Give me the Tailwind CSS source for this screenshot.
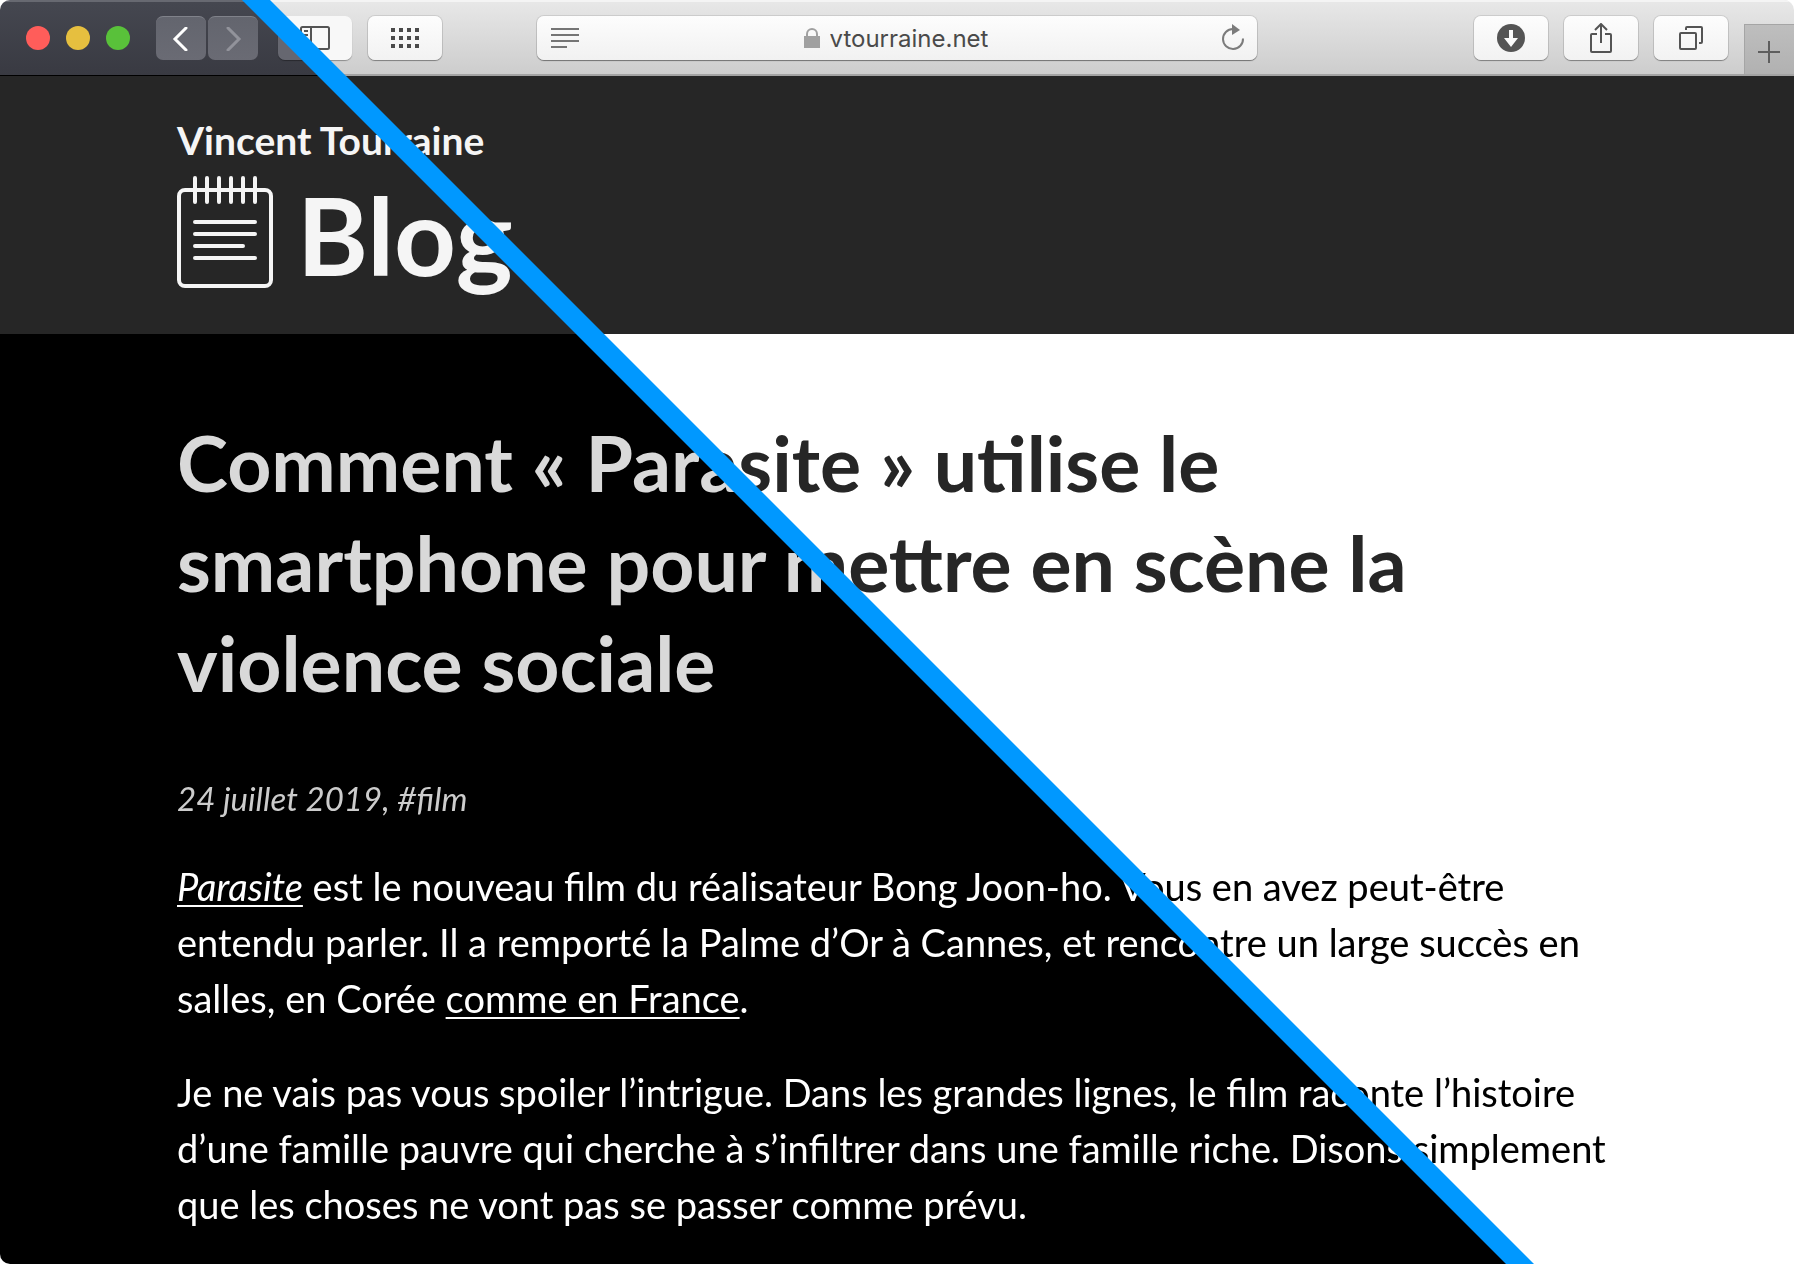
<!DOCTYPE html>
<html lang="fr">
<head>
<meta charset="utf-8">
<title>Vincent Tourraine – Blog</title>
<script src="https://cdn.jsdelivr.net/npm/@tailwindcss/browser@4"></script>
</head>
<body class="bg-white">
<div class="relative isolate flex min-h-screen flex-col overflow-hidden rounded-[10px] bg-white font-['Lato',sans-serif]">

  <!-- Browser toolbar -->
  <div class="relative grid h-[76px] grid-cols-[1fr_720px_1fr] items-center border-b-2 border-[#a3a3a3] bg-linear-to-b from-[#e8e8e8] to-[#cdcdcd] font-['Inter',sans-serif]">
    <div class="absolute inset-x-0 top-0 h-[2px] bg-[#f4f4f4]"></div>
    <div class="absolute inset-x-0 top-0 h-[76px] border-t-2 border-b border-t-[#676971] border-b-black bg-linear-to-b from-[#454750] to-[#393a42] [clip-path:polygon(0_0,256px_0,332px_100%,0_100%)]"></div>

    <div class="relative flex items-center pt-[2px] pl-[26px]">
      <div class="flex gap-4">
        <button aria-label="Fermer" class="size-6 rounded-full bg-[#ff5d5a]"></button>
        <button aria-label="Réduire" class="size-6 rounded-full bg-[#e6bf3f]"></button>
        <button aria-label="Agrandir" class="size-6 rounded-full bg-[#59c13a]"></button>
      </div>
      <div class="ml-[26px] flex gap-[2px]">
        <button aria-label="Précédent" class="flex h-11 w-[50px] items-center justify-center rounded-[7px] border-t border-[#80828a] bg-linear-to-b from-[#63656e] to-[#6a6b74]">
          <svg class="size-6" viewBox="0 0 24 24" fill="none" stroke="#fff" stroke-width="3" stroke-linecap="round"><path d="M17 1 6 12l11 11"/></svg>
        </button>
        <button aria-label="Suivant" class="flex h-11 w-[50px] items-center justify-center rounded-[7px] border-t border-[#80828a] bg-linear-to-b from-[#63656e] to-[#6a6b74]">
          <svg class="size-6" viewBox="0 0 24 24" fill="none" stroke="#92939b" stroke-width="3" stroke-linecap="round"><path d="m7 1 11 11L7 23"/></svg>
        </button>
      </div>
      <button aria-label="Barre latérale" class="ml-5 flex h-11 w-[74px] items-center justify-center rounded-[7px] bg-[linear-gradient(45deg,#666770_27px,#f8f8f8_27px)] shadow-[0_1px_1px_#0005]">
        <svg class="h-6 w-[30px]" viewBox="0 0 30 24" fill="none" stroke="#545454" stroke-width="2"><rect x="1" y="1" width="28" height="22" rx="1.500"/><path d="M11 1v22M4 5h4M4 9h4M4 13h4"/></svg>
      </button>
      <button aria-label="Sites les plus visités" class="ml-4 flex h-11 w-[74px] items-center justify-center rounded-[7px] bg-linear-to-b from-[#fdfdfd] to-[#f2f2f2] shadow-[0_0_0_1px_#00000018,0_1px_1px_#0005]">
        <svg class="h-5 w-7" viewBox="0 0 28 20" fill="none" stroke="#4a4a4a" stroke-width="4" stroke-dasharray="4 4"><path d="M0 2h28M0 10h28M0 18h28"/></svg>
      </button>
    </div>

    <div class="relative mt-[2px] flex h-11 items-center justify-between rounded-[7px] bg-linear-to-b from-[#fdfdfd] to-[#f1f1f1] pr-3 pl-[14px] shadow-[0_0_0_1px_#00000018,0_1px_1px_#0006]">
      <button aria-label="Lecteur">
        <svg class="h-5 w-7" viewBox="0 0 28 20" stroke="#757575" stroke-width="2"><path d="M0 1h28M0 7h28M0 13h28M0 19h16"/></svg>
      </button>
      <label class="flex items-center gap-[10px]">
        <svg class="h-5 w-4" viewBox="0 0 16 20"><path d="M0 8h16v12H0z" fill="#a0a0a0"/><path d="M3 9V6a5 5 0 0 1 10 0v3" fill="none" stroke="#a0a0a0" stroke-width="2"/></svg>
        <input aria-label="Adresse" value="vtourraine.net" class="field-sizing-content bg-transparent pt-[2px] text-2xl text-[#4a4a4a] outline-none">
      </label>
      <button aria-label="Recharger" class="flex w-8 justify-end">
        <svg class="h-[30px] w-6" viewBox="0 0 24 30"><path d="M12 6a10 10 0 1 0 10 9.500" fill="none" stroke="#7b7b7b" stroke-width="2"/><path d="m11 1 8 6-8 5z" fill="#7b7b7b"/></svg>
      </button>
    </div>

    <div class="relative flex h-full items-center justify-end">
      <div class="flex gap-4 pt-[2px]">
        <button aria-label="Téléchargements" class="flex h-11 w-[74px] items-center justify-center rounded-[7px] bg-linear-to-b from-[#fdfdfd] to-[#f2f2f2] shadow-[0_0_0_1px_#00000018,0_1px_1px_#0005]">
          <svg class="size-7" viewBox="0 0 28 28"><circle cx="14" cy="14" r="14" fill="#545454"/><path d="M12 6h4v8h5l-7 9-7-9h5z" fill="#fafafa"/></svg>
        </button>
        <button aria-label="Partager" class="flex h-11 w-[74px] items-center justify-center rounded-[7px] bg-linear-to-b from-[#fdfdfd] to-[#f2f2f2] shadow-[0_0_0_1px_#00000018,0_1px_1px_#0005]">
          <svg class="h-[30px] w-6" viewBox="0 0 24 30" fill="none" stroke="#545454" stroke-width="2"><path d="M8 11H3a1 1 0 0 0-1 1v16a1 1 0 0 0 1 1h18a1 1 0 0 0 1-1V12a1 1 0 0 0-1-1h-5M12 20V2M6 7l6-6 6 6"/></svg>
        </button>
        <button aria-label="Onglets" class="flex h-11 w-[74px] items-center justify-center rounded-[7px] bg-linear-to-b from-[#fdfdfd] to-[#f2f2f2] shadow-[0_0_0_1px_#00000018,0_1px_1px_#0005]">
          <svg class="size-6" viewBox="0 0 24 24" fill="none" stroke="#545454" stroke-width="2"><rect x="1" y="7" width="16" height="16" rx="1"/><path d="M7 4V2a1 1 0 0 1 1-1h14a1 1 0 0 1 1 1v14a1 1 0 0 1-1 1h-2"/></svg>
        </button>
      </div>
      <button aria-label="Nouvel onglet" class="ml-4 flex h-[50px] w-[50px] items-center justify-center self-end border-t border-l border-[#a5a5a5] bg-linear-to-b from-[#bebebe] to-[#b1b1b1] pt-1 pr-[2px]">
        <svg class="size-[22px]" viewBox="0 0 22 22" stroke="#5e5e5e" stroke-width="2"><path d="M11 0v22M0 11h22"/></svg>
      </button>
    </div>
  </div>

  <!-- Site header -->
  <header class="bg-[#262626] px-[177px] pt-9 pb-[39px] text-[#f5f5f5]">
    <div class="mx-auto max-w-[1440px]">
      <a href="#" class="block text-[39px] leading-[57px] font-bold">Vincent Tourraine</a>
      <a href="#" class="flex h-[126px] items-center gap-6 text-[108px] leading-[126px] font-bold">
        <svg class="h-[112px] w-24" viewBox="0 0 96 112" fill="none" stroke="#f5f5f5" stroke-width="4" stroke-linecap="round"><rect x="2" y="14" width="92" height="96" rx="6"/><path d="M18 2v24M30 2v24M42 2v24M54 2v24M66 2v24M78 2v24M18 46h60M18 58h60M18 70h48M18 82h60"/></svg>
        <span class="pt-1">Blog</span>
      </a>
    </div>
  </header>

  <!-- Article: difference blending flips the text colours across the diagonal -->
  <main class="relative isolate grow bg-white px-[177px] pt-[78px] pb-8">
    <svg class="absolute inset-0 size-full" aria-hidden="true"><polygon points="0,0 590,0 4590,4000 0,4000" fill="#000"/></svg>
    <article class="relative mx-auto max-w-[1440px] text-[38px] leading-[56px] text-white mix-blend-difference">
      <h1 class="text-[77px] leading-[100px] font-bold text-[#d9d9d9]">Comment « Parasite » utilise le<br>smartphone pour mettre en scène la<br>violence sociale</h1>
      <p class="mt-[58px] text-[33px] text-[#cccccc] italic">24 juillet 2019, #film</p>
      <p class="mt-8"><a href="#" class="italic underline decoration-2 underline-offset-4">Parasite</a> est le nouveau film du réalisateur Bong Joon-ho. Vous en avez peut-être<br>entendu parler. Il a remporté la Palme d’Or à Cannes, et rencontre un large succès en<br>salles, en Corée <a href="#" class="underline decoration-2 underline-offset-4">comme en France</a>.</p>
      <p class="mt-[38px]">Je ne vais pas vous spoiler l’intrigue. Dans les grandes lignes, le film raconte l’histoire<br>d’une famille pauvre qui cherche à s’infiltrer dans une famille riche. Disons simplement<br>que les choses ne vont pas se passer comme prévu.</p>
    </article>
  </main>

  <!-- Diagonal divider -->
  <svg class="pointer-events-none absolute inset-0 size-full" aria-hidden="true"><polygon points="242,0 270,0 4270,4000 4242,4000" fill="#0098ff"/></svg>
</div>
</body>
</html>
